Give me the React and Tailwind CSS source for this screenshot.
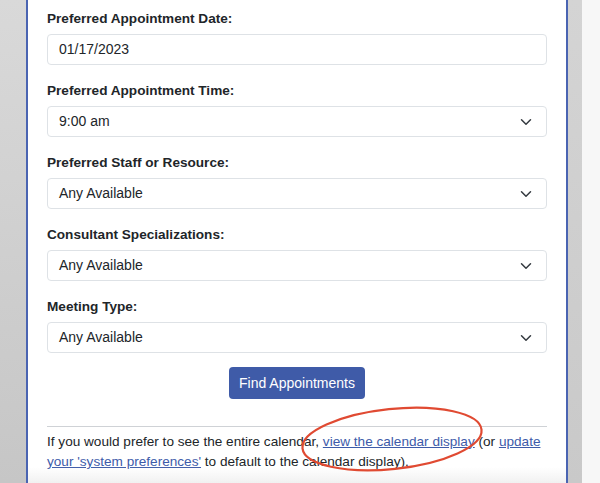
import React from "react";

const font = { fontFamily: '"Liberation Sans", Arial, Helvetica, sans-serif' };

function Chevron() {
  return (
    <svg width="12" height="12" viewBox="0 0 16 16" className="absolute right-[14px] top-1/2 -translate-y-1/2">
      <path d="M2 5l6 6 6-6" fill="none" stroke="#343a40" strokeWidth="2" strokeLinecap="round" strokeLinejoin="round" />
    </svg>
  );
}

function Field({ label, value, select, first }) {
  return (
    <div className={first ? "" : "mt-[15px]"}>
      <div className="text-[13.6px] leading-[21px] font-bold text-[#212529] mb-[5px]">{label}</div>
      <div className="relative h-[31px] w-full rounded-[4px] border border-[#dee2e6] bg-white flex items-center pl-[11px] text-[14px] text-[#212529]">
        {value}
        {select && <Chevron />}
      </div>
    </div>
  );
}

export default function App() {
  return (
    <div className="w-[600px] h-[483px] flex overflow-hidden bg-white relative" style={font}>
      <div className="w-[26px] h-full bg-gradient-to-b from-[#d9d9d9] to-[#c6c6c6]" />
      <div className="w-[542px] h-full border-l-2 border-r-2 border-[#4a64b2] bg-white relative">
        <div className="px-[19px] pt-[8px]">
          <Field first label="Preferred Appointment Date:" value="01/17/2023" />
          <Field select label="Preferred Appointment Time:" value="9:00 am" />
          <Field select label="Preferred Staff or Resource:" value="Any Available" />
          <Field select label="Consultant Specializations:" value="Any Available" />
          <Field select label="Meeting Type:" value="Any Available" />
          <div className="flex justify-center mt-[14px]">
            <div className="h-[32px] w-[136px] rounded-[4px] bg-[#3f5ba8] text-white text-[14px] flex items-center justify-center">
              Find Appointments
            </div>
          </div>
          <div className="mt-[27px] border-t border-[#cfd2d6]" />
          <p className="mt-[5px] text-[13.6px] leading-[20px] text-[#212529]">
            If you would prefer to see the entire calendar,{" "}
            <span className="text-[#3d5ba9] underline">view the calendar display</span> (or{" "}
            <span className="text-[#3d5ba9] underline">update your 'system preferences'</span> to default to the calendar display).
          </p>
        </div>
        <div className="absolute left-0 right-0 bottom-0 h-[16px] bg-gradient-to-b from-transparent to-[#f1f1f1]" />
      </div>
      <div className="w-[14px] h-full bg-gradient-to-b from-[#d4d4d4] to-[#c9c9c9]" />
      <div className="flex-1 h-full bg-[#f7f7f7]" />
      <svg className="absolute left-0 top-0 pointer-events-none" width="600" height="483">
        <ellipse cx="392" cy="439" rx="90" ry="30" transform="rotate(-6 392 439)" fill="none" stroke="#e04a32" strokeWidth="2.2" />
      </svg>
    </div>
  );
}
